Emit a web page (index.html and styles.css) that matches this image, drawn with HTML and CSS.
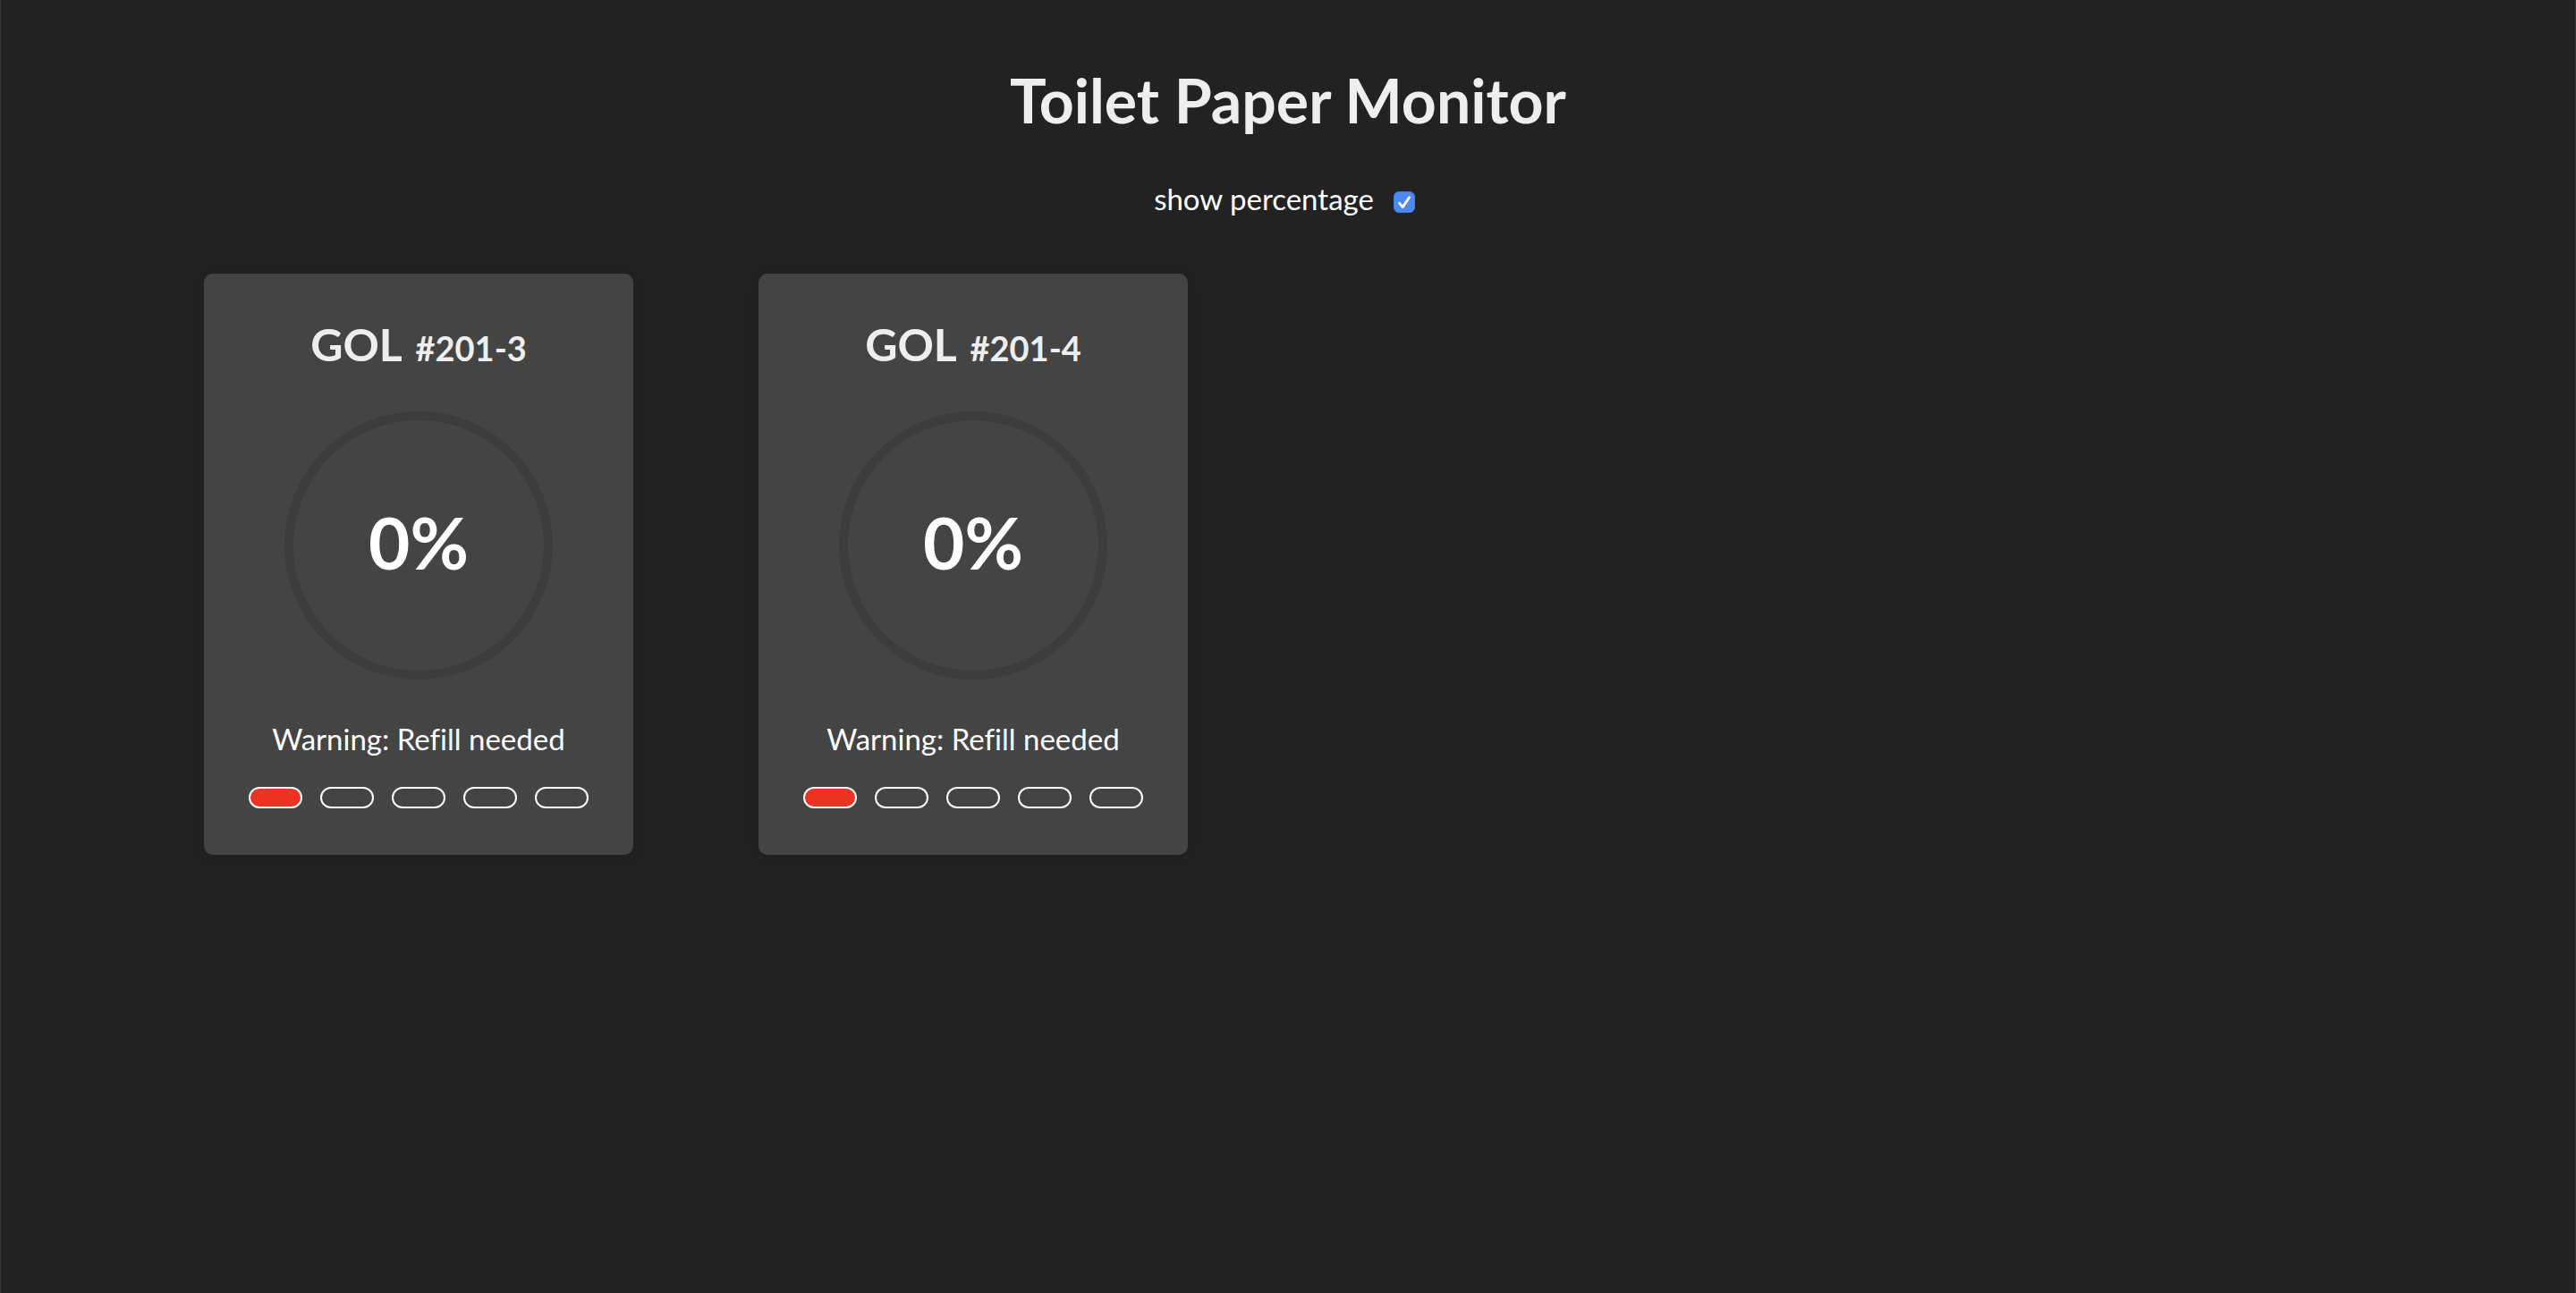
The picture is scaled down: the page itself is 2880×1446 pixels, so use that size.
FILE: index.html
```html
<!DOCTYPE html>
<html lang="en">
<head>
  <meta charset="utf-8">
  <meta name="viewport" content="width=device-width, initial-scale=1">
  <title>Toilet Paper Monitor</title>
  <link rel="stylesheet" href="styles.css">
</head>
<body>
  <header class="header">
    <h1 class="title">Toilet Paper Monitor</h1>
    <div class="option">
      <label for="show-percentage">show percentage</label>
      <input class="checkbox" type="checkbox" id="show-percentage" checked>
    </div>
  </header>
  <main class="cards">
    <article class="card">
      <h2 class="room">GOL <span class="room-number">#201-3</span></h2>
      <div class="ring">0%</div>
      <p class="status">Warning: Refill needed</p>
      <div class="levels">
        <span class="level level-low"></span>
        <span class="level"></span>
        <span class="level"></span>
        <span class="level"></span>
        <span class="level"></span>
      </div>
    </article>
    <article class="card">
      <h2 class="room">GOL <span class="room-number">#201-4</span></h2>
      <div class="ring">0%</div>
      <p class="status">Warning: Refill needed</p>
      <div class="levels">
        <span class="level level-low"></span>
        <span class="level"></span>
        <span class="level"></span>
        <span class="level"></span>
        <span class="level"></span>
      </div>
    </article>
  </main>
</body>
</html>
```

FILE: styles.css
```css
* {
  box-sizing: border-box;
}

body {
  margin: 0;
  min-height: 100vh;
  border: solid #3a3a3a;
  border-width: 0 1px;
  background: #222;
  color: #fff;
  font-family: "Avenir Next", Avenir, Lato, sans-serif;
  font-size: 33px;
  font-variant-ligatures: none;
  line-height: 44px;
}

.header {
  display: flex;
  flex-direction: column;
  align-items: center;
  gap: 44px;
  padding-top: 68px;
}

.title {
  margin: 0;
  color: #eee;
  font-size: 68px;
  font-weight: 700;
  line-height: 88px;
}

.option {
  display: flex;
  align-items: center;
  gap: 22px;
  padding-right: 8px;
}

.checkbox {
  appearance: none;
  width: 24px;
  height: 24px;
  margin: 8px 0 0;
  border: 1px solid #3f7ae6;
  border-radius: 6px;
  background: #4d88f5;
}

.checkbox:checked {
  background: #4d88f5 url("data:image/svg+xml,%3Csvg xmlns='http://www.w3.org/2000/svg' viewBox='0 0 22 22'%3E%3Cpath d='M5.5 12.2 9.2 16.6 16.6 5.8' fill='none' stroke='white' stroke-width='2.8' stroke-linecap='round' stroke-linejoin='round'/%3E%3C/svg%3E") center / 22px no-repeat;
}

.cards {
  display: flex;
  flex-wrap: wrap;
  gap: 140px;
  padding: 62px 227px;
}

.card {
  display: flex;
  flex-direction: column;
  align-items: center;
  width: 480px;
  padding: 46px 50px 52px;
  border-radius: 10px;
  background: #444;
  box-shadow: 0 2px 16px rgba(0, 0, 0, 0.1);
}

.room {
  margin: 0 0 42px;
  color: #eee;
  font-size: 50px;
  font-weight: 700;
  line-height: 66px;
}

.room-number {
  margin-left: 4px;
  font-size: 38px;
  line-height: 44px;
}

.ring {
  display: flex;
  align-items: center;
  justify-content: center;
  width: 300px;
  height: 300px;
  padding-bottom: 8px;
  border: 10px solid #3c3c3c;
  border-radius: 50%;
  font-size: 80px;
  font-weight: 700;
}

.status {
  margin: 44px 0 32px;
}

.levels {
  display: flex;
  gap: 20px;
}

.level {
  width: 60px;
  height: 24px;
  border: 2px solid #fff;
  border-radius: 12px;
}

.level-low {
  background: #ec3323;
}
```
